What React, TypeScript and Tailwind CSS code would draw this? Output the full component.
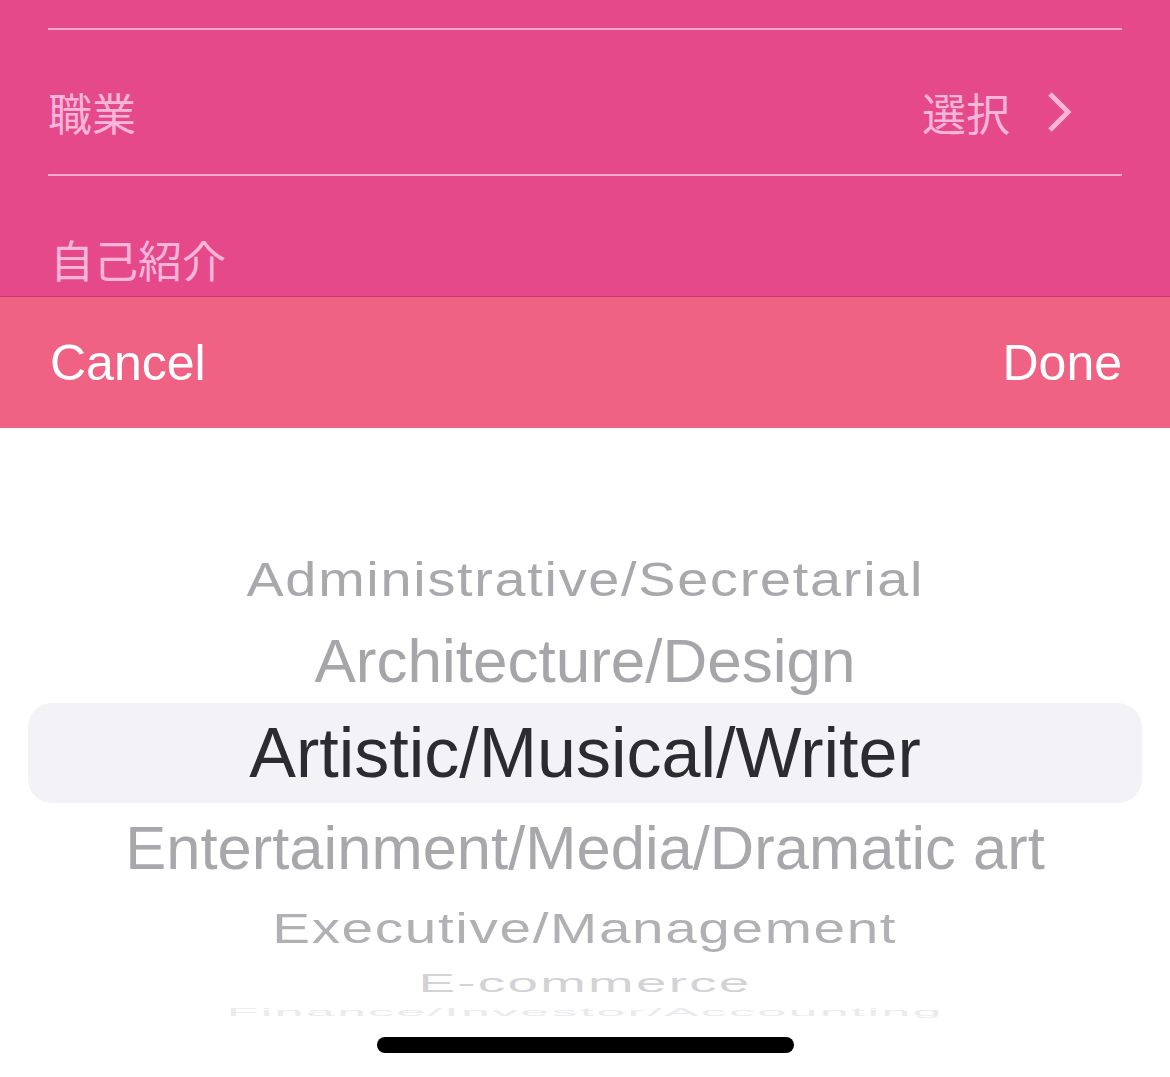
import React from 'react';

const latin = { fontFamily: '"Liberation Sans", Arial, sans-serif' };
const cjk = { fontFamily: '"Noto Sans CJK JP", "Noto Sans", sans-serif' };

export default function App() {
  return (
    <div className="w-[1170px] h-[1077px] overflow-hidden flex flex-col bg-white" style={latin}>
      {/* Form behind the sheet */}
      <div className="h-[297px] shrink-0 bg-[#e6498a] border-b border-[#c43a70] flex flex-col px-12 pt-[28px]">
        <div className="h-[148px] border-y-2 border-[#f9a8d2] flex items-center justify-between pt-5">
          <span className="text-[44px] leading-none text-[#f9b6d8]" style={cjk}>職業</span>
          <div className="flex items-center gap-[36px] pr-[50px]">
            <span className="text-[44px] leading-none text-[#f9b6d8]" style={cjk}>選択</span>
            <svg width="26" height="44" viewBox="0 0 26 44" fill="none">
              <polyline points="4,4 22,22 4,40" stroke="#f9b6d8" strokeWidth="5" strokeLinejoin="miter" />
            </svg>
          </div>
        </div>
        <div className="pt-[61px] pl-[2px]">
          <span className="text-[44px] leading-none text-[#f9b6d8] block" style={cjk}>自己紹介</span>
        </div>
      </div>

      {/* Toolbar */}
      <div className="h-[131px] shrink-0 bg-[#f06284] flex items-center justify-between pl-[50px] pr-[48px]">
        <span className="text-[50px] leading-none text-white">Cancel</span>
        <span className="text-[50px] leading-none text-white">Done</span>
      </div>

      {/* Picker wheel */}
      <div className="flex-1 flex flex-col items-center pt-[112px]">
        <div className="w-full h-[480px] overflow-hidden flex flex-col">
          <div className="h-[78px] shrink-0 flex items-center justify-center">
            <span className="whitespace-nowrap text-[49px] leading-none tracking-[1.5px] scale-x-[1.14] text-[#a9a8ad]">
              Administrative/Secretarial
            </span>
          </div>
          <div className="h-[85px] shrink-0 flex items-center justify-center">
            <span className="whitespace-nowrap text-[62px] leading-none text-[#a6a5aa]">
              Architecture/Design
            </span>
          </div>
          <div className="h-[100px] shrink-0 mx-7 rounded-[24px] bg-[#f3f2f7] flex items-center justify-center">
            <span className="whitespace-nowrap text-[70px] leading-none text-[#2c2b30]">
              Artistic/Musical/Writer
            </span>
          </div>
          <div className="h-[90px] shrink-0 flex items-center justify-center">
            <span className="whitespace-nowrap text-[61.5px] leading-none text-[#a8a7ac]">
              Entertainment/Media/Dramatic art
            </span>
          </div>
          <div className="h-[69px] shrink-0 flex items-center justify-center">
            <span className="whitespace-nowrap text-[52px] leading-none tracking-[1.5px] scale-x-[1.09] scale-y-[0.82] text-[#b1b0b5]">
              Executive/Management
            </span>
          </div>
          <div className="h-[42px] shrink-0 flex items-center justify-center">
            <span className="whitespace-nowrap text-[48px] leading-none tracking-[2px] scale-x-[1.14] scale-y-[0.55] text-[#d3d2d7]">
              E-commerce
            </span>
          </div>
          <div className="h-[16px] shrink-0 flex items-center justify-center overflow-hidden">
            <span className="whitespace-nowrap text-[46px] leading-none tracking-[2px] scale-x-[1.13] scale-y-[0.25] text-[#ebeaee]">
              Finance/Investor/Accounting
            </span>
          </div>
        </div>
        <div className="mt-[17px] h-[16px] w-[417px] rounded-full bg-black" />
      </div>
    </div>
  );
}
